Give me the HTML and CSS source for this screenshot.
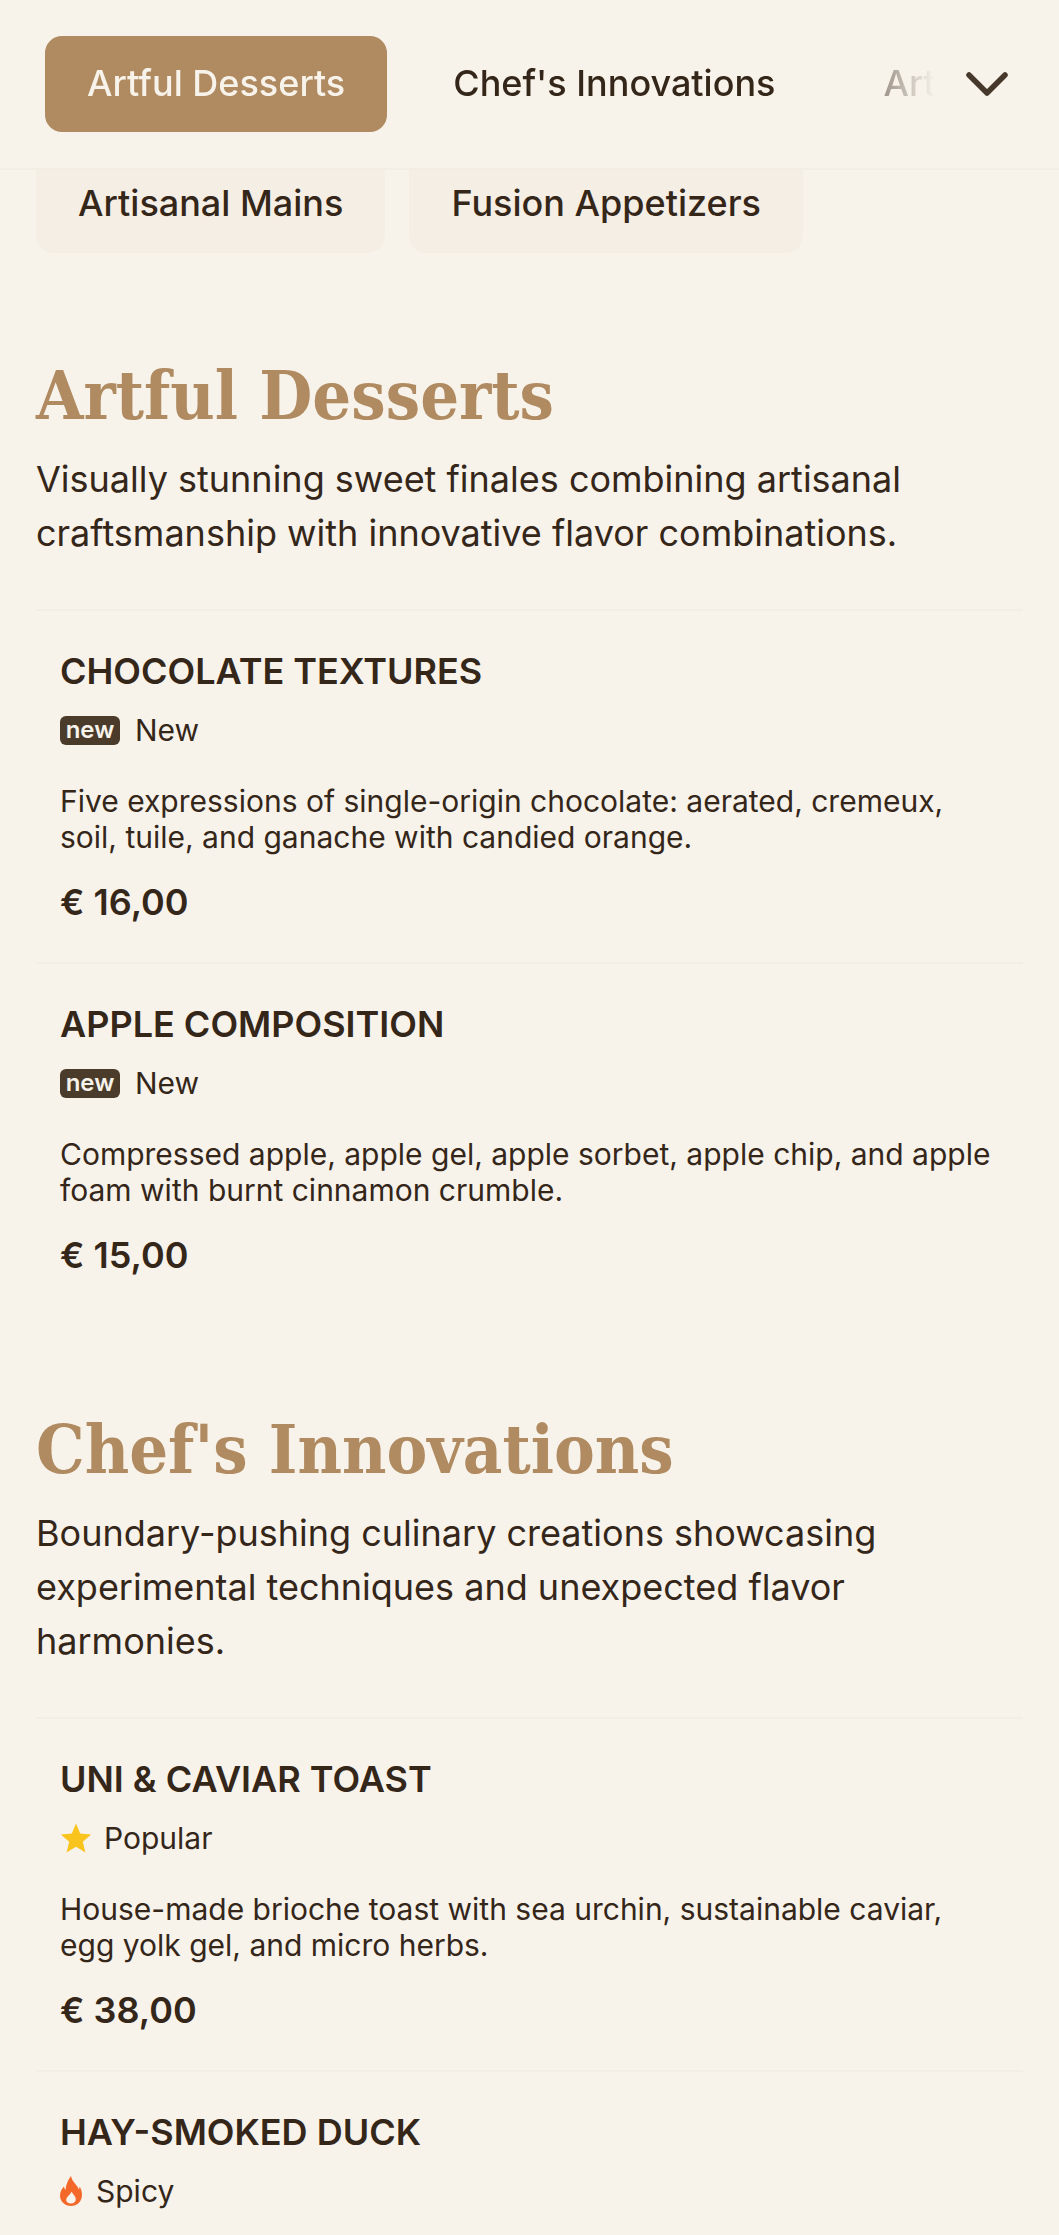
FILE: index.html
```html
<!DOCTYPE html>
<html lang="en">
<head>
<meta charset="utf-8">
<title>Menu</title>
<link rel="stylesheet" href="styles.css">
</head>
<body>
<header class="topbar">
  <nav class="tabs">
    <a class="tab tab-active">Artful Desserts</a>
    <a class="tab">Chef's Innovations</a>
    <a class="tab">Art</a>
  </nav>
  <button class="toggle" aria-label="Expand">
    <svg width="44" height="26" viewBox="0 0 44 26"><path d="M4 4 L22 22 L40 4" fill="none" stroke="#46382a" stroke-width="5.5" stroke-linecap="round" stroke-linejoin="round"/></svg>
  </button>
</header>
<main class="page">
  <div class="pills">
    <a class="pill">Artisanal Mains</a>
    <a class="pill">Fusion Appetizers</a>
  </div>
  <section class="section">
    <h2>Artful Desserts</h2>
    <p class="lead">Visually stunning sweet finales combining artisanal craftsmanship with innovative flavor combinations.</p>
    <article class="item">
      <h3>CHOCOLATE TEXTURES</h3>
      <div class="tag"><span class="badge">new</span><span>New</span></div>
      <p class="desc">Five expressions of single-origin chocolate: aerated, cremeux, soil, tuile, and ganache with candied orange.</p>
      <div class="price">€ 16,00</div>
    </article>
    <article class="item">
      <h3>APPLE COMPOSITION</h3>
      <div class="tag"><span class="badge">new</span><span>New</span></div>
      <p class="desc">Compressed apple, apple gel, apple sorbet, apple chip, and apple foam with burnt cinnamon crumble.</p>
      <div class="price">€ 15,00</div>
    </article>
  </section>
  <section class="section">
    <h2>Chef's Innovations</h2>
    <p class="lead">Boundary-pushing culinary creations showcasing experimental techniques and unexpected flavor harmonies.</p>
    <article class="item">
      <h3>UNI &amp; CAVIAR TOAST</h3>
      <div class="tag tag-star">
        <svg class="ico" width="32" height="31" viewBox="0 0 32 31"><path d="M16 0.5 L20.2 10.6 L31.2 11.5 L22.8 18.7 L25.4 29.6 L16 23.8 L6.6 29.6 L9.2 18.7 L0.8 11.5 L11.8 10.6 Z" fill="#fac41e"/></svg>
        <span>Popular</span>
      </div>
      <p class="desc">House-made brioche toast with sea urchin, sustainable caviar, egg yolk gel, and micro herbs.</p>
      <div class="price">€ 38,00</div>
    </article>
    <article class="item">
      <h3>HAY-SMOKED DUCK</h3>
      <div class="tag tag-spicy">
        <svg class="ico" width="22" height="30" viewBox="0 0 22 30"><path fill-rule="evenodd" d="M11 0 C12 5 15 7 17 10 C18 11.5 18.5 12.5 18.7 13.5 C19.3 12.8 19.6 11.8 19.6 10.8 C21.2 13 22 16 22 19 C22 25.5 17 30 11 30 C5 30 0 25.5 0 19.5 C0 15.5 2 12.5 4 10.5 C4.2 12 4.7 13 5.5 13.8 C6 8.5 8 4 11 0 Z M11 27.5 C13.8 27.5 15.8 25.8 15.8 23.2 C15.8 20.5 13.2 18.5 11.6 15.8 C10.4 18.2 9 19 7.6 20.8 C6.6 22 6.2 23 6.2 24 C6.2 26 8.3 27.5 11 27.5 Z" fill="#f4682a"/></svg>
        <span>Spicy</span>
      </div>
    </article>
  </section>
</main>
</body>
</html>
```
FILE: styles.css
```css
* { box-sizing: border-box; }
html, body { margin: 0; padding: 0; }
body {
  background: #f7f3ea;
  color: #35261a;
  font-family: Inter, "Liberation Sans", sans-serif;
  height: 2235px;
  overflow: hidden;
  position: relative;
}
.topbar {
  position: absolute;
  top: 0; left: 0; right: 0;
  height: 170px;
  background: #f7f3ea;
  border-bottom: 2px solid #f3eee4;
  display: flex;
  align-items: flex-start;
  overflow: hidden;
}
.tabs {
  width: 935px;
  flex: none;
  display: flex;
  gap: 24px;
  padding: 36px 0 0 45px;
  overflow: hidden;
  -webkit-mask-image: linear-gradient(to right, #000 878px, rgba(0,0,0,.45) 884px, transparent 935px);
  mask-image: linear-gradient(to right, #000 878px, rgba(0,0,0,.45) 884px, transparent 935px);
}
.tab {
  flex: none;
  height: 96px;
  padding: 0 42px 2px;
  display: flex;
  align-items: center;
  border-radius: 17px;
  font-size: 36px;
  font-weight: 500;
  color: #35261a;
}
.tab-active { background: #b08a60; color: #f7f3ea; }
.toggle {
  flex: none;
  width: 124px;
  height: 168px;
  border: 0;
  background: transparent;
  display: flex;
  align-items: center;
  justify-content: center;
  padding: 0 21px 0 0;
}
.page { padding: 156px 36px 0; }
.pills { display: flex; gap: 24px; margin-bottom: 8px; }
.pill {
  height: 97px;
  padding: 0 42px 3px;
  display: flex;
  align-items: center;
  background: #f5eee4;
  border-radius: 17px;
  font-size: 36px;
  font-weight: 500;
}
h2 {
  margin: 0;
  font-family: "DejaVu Serif", "Liberation Serif", serif;
  font-stretch: condensed;
  font-weight: 700;
  font-size: 68px;
  line-height: 90px;
  color: #b08a60;
  padding-top: 89px;
}
.lead {
  margin: 12px 0 49px;
  font-size: 36px;
  line-height: 54px;
}
.item { padding: 40px 24px 38px; border-top: 2px solid #f3eee4; }
h3 { margin: 0; font-size: 36px; font-weight: 600; line-height: 40px; }
.tag {
  display: flex;
  align-items: center;
  gap: 12px;
  margin-top: 19px;
  font-size: 30px;
  height: 40px;
}
.tag-spicy { gap: 14px; }
.badge {
  background: #4a3b2a;
  color: #f7f3ea;
  border-radius: 6px;
  width: 60px;
  height: 29px;
  margin-right: 3px;
  display: flex;
  align-items: center;
  justify-content: center;
  padding-bottom: 2px;
  font-size: 24px;
  font-weight: 600;
}
.desc { margin: 33px 0 0; font-size: 30px; line-height: 36px; }
.price { margin-top: 25px; font-size: 36px; font-weight: 600; line-height: 44px; }
```
